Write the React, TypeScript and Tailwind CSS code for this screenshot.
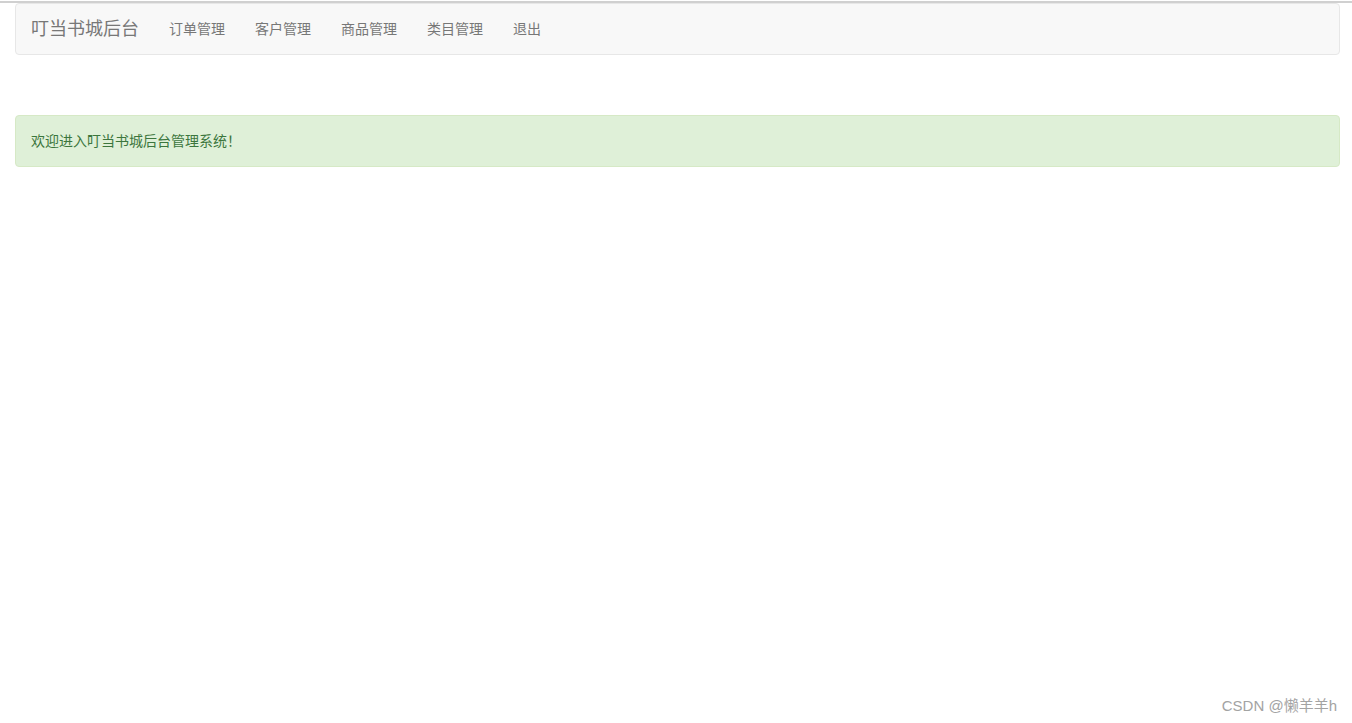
import React from "react";

const links = ["订单管理", "客户管理", "商品管理", "类目管理", "退出"];

export default function App() {
  return (
    <div
      className="relative min-h-screen bg-white text-[14px] text-[#333]"
      style={{ fontFamily: '"Liberation Sans", "Noto Sans CJK SC", sans-serif' }}
    >
      <div className="h-px bg-white" />
      <div className="h-[2px] bg-[#d0d0d0]" />

      {/* navbar */}
      <nav className="ml-[15px] mr-[12px] flex h-[52px] items-center rounded-[4px] border border-[#e7e7e7] bg-[#f8f8f8]">
        <a className="px-[15px] text-[18px] leading-[20px] text-[#777]">叮当书城后台</a>
        <ul className="flex">
          {links.map(l => (
            <li key={l}>
              <a className="block px-[15px] leading-[20px] text-[#777]">{l}</a>
            </li>
          ))}
        </ul>
      </nav>

      <div className="ml-[15px] mr-[12px] mt-[60px] rounded-[4px] border border-[#d6e9c6] bg-[#dff0d8] p-[15px] leading-[20px] text-[#3c763d]">
        欢迎进入叮当书城后台管理系统！
      </div>

      {/* watermark */}
      <div className="absolute bottom-[6px] right-[15px] text-[15px] text-[#a3a3a3]">CSDN @懒羊羊h</div>
    </div>
  );
}
